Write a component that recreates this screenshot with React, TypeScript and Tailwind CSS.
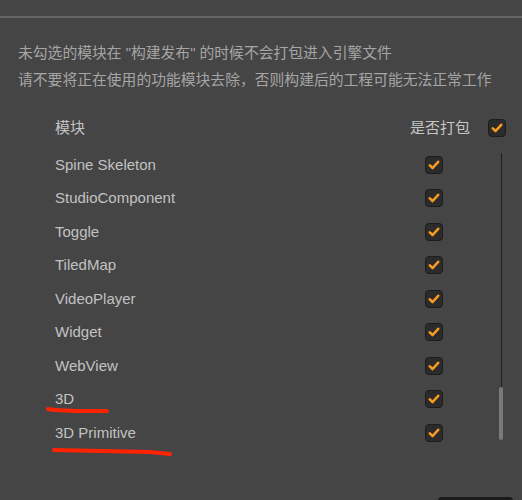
const modules = [
  'Spine Skeleton',
  'StudioComponent',
  'Toggle',
  'TiledMap',
  'VideoPlayer',
  'Widget',
  'WebView',
  '3D',
  '3D Primitive',
]

const font = { fontFamily: '"Liberation Sans", "Noto Sans CJK SC", sans-serif' }

function Check() {
  return (
    <span className="flex h-[18px] w-[18px] items-center justify-center rounded-[4px] border border-[#1c1c1c] bg-[#2b2b2b]">
      <svg width="14" height="14" viewBox="0 0 14 14" fill="none">
        <path d="M2.8 7.4 L5.6 10 L11.2 3.8" stroke="#f89b1f" strokeWidth="2.6" strokeLinecap="round" strokeLinejoin="round" />
      </svg>
    </span>
  )
}

export default function App() {
  return (
    <div className="relative h-[500px] w-[522px] overflow-hidden bg-[#454545]" style={font}>
      <div className="h-[16px]" />
      <div className="h-[2px] bg-[#646464]" />

      {/* description */}
      <div className="mt-[22px] pl-[18px] text-[14.8px] leading-[27px] text-[#a6a6a6]">
        <div>未勾选的模块在 "构建发布" 的时候不会打包进入引擎文件</div>
        <div>请不要将正在使用的功能模块去除，否则构建后的工程可能无法正常工作</div>
      </div>

      {/* header */}
      <div className="mt-[21px] flex h-[26px] items-center pl-[55px] pr-[16px] text-[15px] text-[#c4c4c4]">
        <span className="flex-1">模块</span>
        <span className="mr-[18px]">是否打包</span>
        <Check />
      </div>

      {/* list */}
      <div className="mt-[7px] flex">
        <div className="flex-1 pl-[55px]">
          {modules.map((m) => (
            <div key={m} className="flex h-[33.5px] items-center text-[15px] text-[#c2c2c2]">
              <span className="flex-1">{m}</span>
              <span className="mr-[56px]"><Check /></span>
            </div>
          ))}
        </div>
        <div className="mr-[19px] flex w-[4px] flex-col items-center pt-[5px]">
          <div className="h-[234px] w-px bg-[#1f1f1f]" />
          <div className="h-[53px] w-[4px] rounded-full bg-[#7a7a7a]" />
        </div>
      </div>

      {/* red annotations */}
      <svg className="pointer-events-none absolute left-0 top-0" width="522" height="500">
        <path d="M48 409 C58 411 66 410 76 411 L107 411" stroke="#ff2200" strokeWidth="4" strokeLinecap="round" fill="none" />
        <path d="M54 450 L150 452 L170 454" stroke="#ff2200" strokeWidth="4" strokeLinecap="round" fill="none" />
      </svg>

      <div className="absolute bottom-[-20px] left-[438px] h-[23px] w-[75px] rounded-[4px] bg-[#1a1a1a]" />
    </div>
  )
}
